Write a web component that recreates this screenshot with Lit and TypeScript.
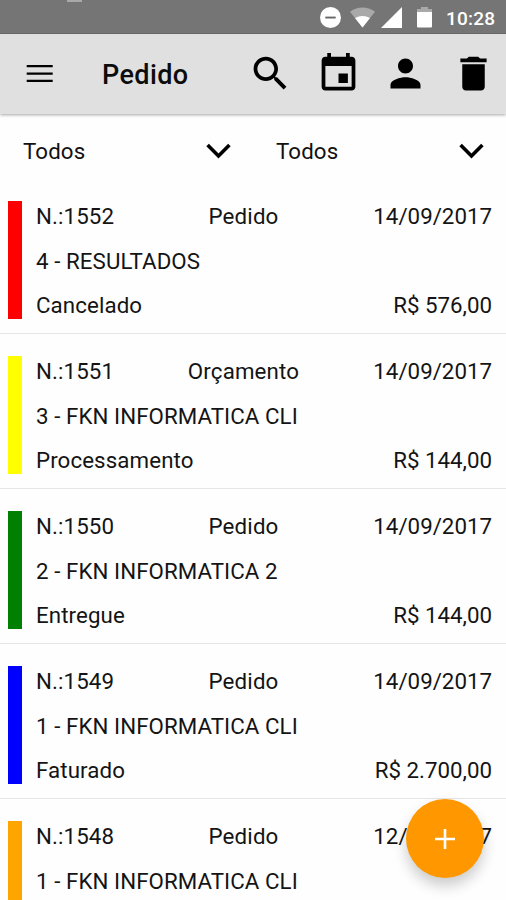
import { LitElement, html, css, nothing } from "lit";
import { customElement, property } from "lit/decorators.js";

interface Order {
  id: number;
  kind: string;
  date: string;
  client: string;
  status?: string;
  total?: string;
  color: string;
}

const ORDERS: Order[] = [
  { id: 1552, kind: "Pedido", date: "14/09/2017", client: "4 - RESULTADOS", status: "Cancelado", total: "R$ 576,00", color: "#ff0000" },
  { id: 1551, kind: "Orçamento", date: "14/09/2017", client: "3 - FKN INFORMATICA CLI", status: "Processamento", total: "R$ 144,00", color: "#ffff00" },
  { id: 1550, kind: "Pedido", date: "14/09/2017", client: "2 - FKN INFORMATICA 2", status: "Entregue", total: "R$ 144,00", color: "#008000" },
  { id: 1549, kind: "Pedido", date: "14/09/2017", client: "1 - FKN INFORMATICA CLI", status: "Faturado", total: "R$ 2.700,00", color: "#0000ff" },
  { id: 1548, kind: "Pedido", date: "12/09/2017", client: "1 - FKN INFORMATICA CLI", color: "#ffa500" },
];

@customElement("status-bar")
export class StatusBar extends LitElement {
  static styles = css`
    :host {
      display: block;
      position: relative;
      height: 34px;
      box-sizing: border-box;
      background: #757575;
      border-bottom: 1px solid #666;
      color: #fff;
    }
    .notch {
      position: absolute;
      left: 67px;
      top: 0;
      width: 15px;
      height: 2px;
      background: #a9a9a9;
    }
    .tray {
      display: flex;
      align-items: center;
      justify-content: flex-end;
      height: 35px;
      padding-right: 10px;
    }
    .dnd { margin-right: 9px; }
    .wifi { margin-right: 6px; }
    .cell { margin-right: 15px; }
    .battery { margin-right: 14px; }
    svg { display: block; }
    .clock {
      font: 500 19px/34px Roboto, sans-serif;
      width: 50px;
      white-space: nowrap;
      letter-spacing: 0.2px;
      padding-top: 2px;
    }
  `;
  render() {
    return html`
      <div class="notch"></div>
      <div class="tray">
        <svg class="dnd" width="21" height="21" viewBox="0 0 21 21"><circle cx="10.5" cy="10.5" r="10.5" fill="#fff" /><path d="M5.3 9.6h10.4v1.9H5.3z" fill="#666" /></svg>
        <svg class="wifi" width="25" height="21" viewBox="0 0 25 21"><path d="M0 4.7Q12.5-3.7 25 4.7L12.5 20.5z" fill="#a9a9a9" /><path d="M5 11Q12.5 6.8 20 11L12.5 20.5z" fill="#fff" /></svg>
        <svg class="cell" width="21" height="21" viewBox="0 0 21 21"><path d="M21 0v21H0z" fill="#fff" /></svg>
        <svg class="battery" width="15" height="21" viewBox="0 0 15 21"><path d="M4 0h7v2h4v4H0V2h4z" fill="#a9a9a9" /><path d="M0 5h15v14.5a1 1 0 0 1-1 1H1a1 1 0 0 1-1-1z" fill="#fff" /></svg>
        <span class="clock">10:28</span>
      </div>
    `;
  }
}

@customElement("app-bar")
export class AppBar extends LitElement {
  static styles = css`
    :host {
      display: flex;
      align-items: center;
      height: 80px;
      box-sizing: border-box;
      padding: 0 10.5px 1px 26px;
      background: #e0e0e0;
      box-shadow: 0 1px 3px rgba(0, 0, 0, 0.35);
    }
    svg { display: block; }
    .title {
      flex: 1;
      margin: 3px 0 0 49px;
      font: 500 27px/36px Roboto, sans-serif;
      letter-spacing: 0.4px;
      color: #0c0c0c;
    }
    .actions { display: flex; gap: 22.5px; }
  `;
  private action(d: string) {
    return html`<svg width="45" height="45" viewBox="0 0 24 24"><path d=${d} /></svg>`;
  }
  render() {
    return html`
      <svg width="27" height="20" viewBox="0 0 27 20"><path d="M.7 1h26v2.2H.7zM.7 8.5h26v2.2H.7zM.7 15.8h26V18H.7z" /></svg>
      <span class="title">Pedido</span>
      <div class="actions">
        ${this.action("M15.5 14h-.79l-.28-.27C15.41 12.59 16 11.11 16 9.5 16 5.91 13.09 3 9.5 3S3 5.91 3 9.5 5.91 16 9.5 16c1.61 0 3.09-.59 4.23-1.57l.27.28v.79l5 4.99L20.49 19l-4.99-5zm-6 0C7.01 14 5 11.99 5 9.5S7.01 5 9.5 5 14 7.01 14 9.5 11.99 14 9.5 14z")}
        ${this.action("M17 12h-5v5h5v-5zM16 1v2H8V1H6v2H5c-1.11 0-1.99.9-1.99 2L3 19c0 1.1.89 2 2 2h14c1.1 0 2-.9 2-2V5c0-1.1-.9-2-2-2h-1V1h-2zm3 18H5V8h14v11z")}
        ${this.action("M12 12c2.21 0 4-1.79 4-4s-1.79-4-4-4-4 1.79-4 4 1.79 4 4 4zm0 2c-2.67 0-8 1.34-8 4v2h16v-2c0-2.66-5.33-4-8-4z")}
        ${this.action("M6 19c0 1.1.9 2 2 2h8c1.1 0 2-.9 2-2V7H6v12zM19 4h-3.5l-1-1h-5l-1 1H5v2h14V4z")}
      </div>
    `;
  }
}

@customElement("filter-select")
export class FilterSelect extends LitElement {
  static styles = css`
    :host {
      display: flex;
      align-items: center;
      justify-content: space-between;
      height: 65px;
      box-sizing: border-box;
      padding: 8px 22px 0 23px;
      color: #111;
    }
    .value { letter-spacing: 0.1px; }
    svg { display: block; }
  `;
  render() {
    return html`
      <span class="value">Todos</span>
      <svg width="25" height="17" viewBox="0 0 25 17"><path d="M1.6 3l10.9 10.9L23.4 3" fill="none" stroke="#000" stroke-width="3.6" /></svg>
    `;
  }
}

@customElement("order-row")
export class OrderRow extends LitElement {
  @property({ attribute: false }) order!: Order;

  static styles = css`
    :host {
      display: flex;
      height: 155px;
      box-sizing: border-box;
      padding: 22px 14px 14px 7.5px;
      border-bottom: 1.5px solid #e6e6e6;
      color: #141414;
    }
    .mark { width: 14px; height: 118px; flex: none; }
    .body { flex: 1; margin: -7px 0 0 14.5px; }
    .line {
      display: grid;
      grid-template-columns: 1fr auto 1fr;
      height: 44.3px;
      line-height: 44.3px;
      white-space: nowrap;
    }
    .number { letter-spacing: 0.1px; }
    .kind { letter-spacing: 0.15px; transform: translateX(-20.5px); }
    .end { grid-column: 3; text-align: right; }
    .client { height: 44.3px; line-height: 46.4px; white-space: nowrap; letter-spacing: 0.07px; }
  `;
  render() {
    const o = this.order;
    return html`
      <div class="mark" style="background:${o.color}"></div>
      <div class="body">
        <div class="line"><span class="number">N.:${o.id}</span><span class="kind">${o.kind}</span><span class="end">${o.date}</span></div>
        <div class="client">${o.client}</div>
        ${o.status ? html`<div class="line"><span class="number">${o.status}</span><span class="end">${o.total}</span></div>` : nothing}
      </div>
    `;
  }
}

@customElement("app-root")
export class AppRoot extends LitElement {
  static styles = css`
    :host {
      display: block;
      position: relative;
      height: 900px;
      overflow: hidden;
      background: #fefefe;
      font: 400 22.3px Roboto, sans-serif;
    }
    .filters { display: grid; grid-template-columns: 1fr 1fr; }
    .fab {
      position: absolute;
      left: 406px;
      top: 799px;
      width: 78px;
      height: 79px;
      padding: 0;
      border: 0;
      border-radius: 50%;
      background: #ff9800;
      box-shadow: 0 8px 14px rgba(0, 0, 0, 0.2);
      display: grid;
      place-items: center;
    }
  `;
  render() {
    return html`
      <status-bar></status-bar>
      <app-bar></app-bar>
      <div class="filters"><filter-select></filter-select><filter-select></filter-select></div>
      ${ORDERS.map((o) => html`<order-row .order=${o}></order-row>`)}
      <button class="fab" aria-label="Novo pedido">
        <svg width="20" height="20" viewBox="0 0 20 20"><path d="M8.7 0h2.6v8.7H20v2.6h-8.7V20H8.7v-8.7H0V8.7h8.7z" fill="#fff" /></svg>
      </button>
    `;
  }
}
